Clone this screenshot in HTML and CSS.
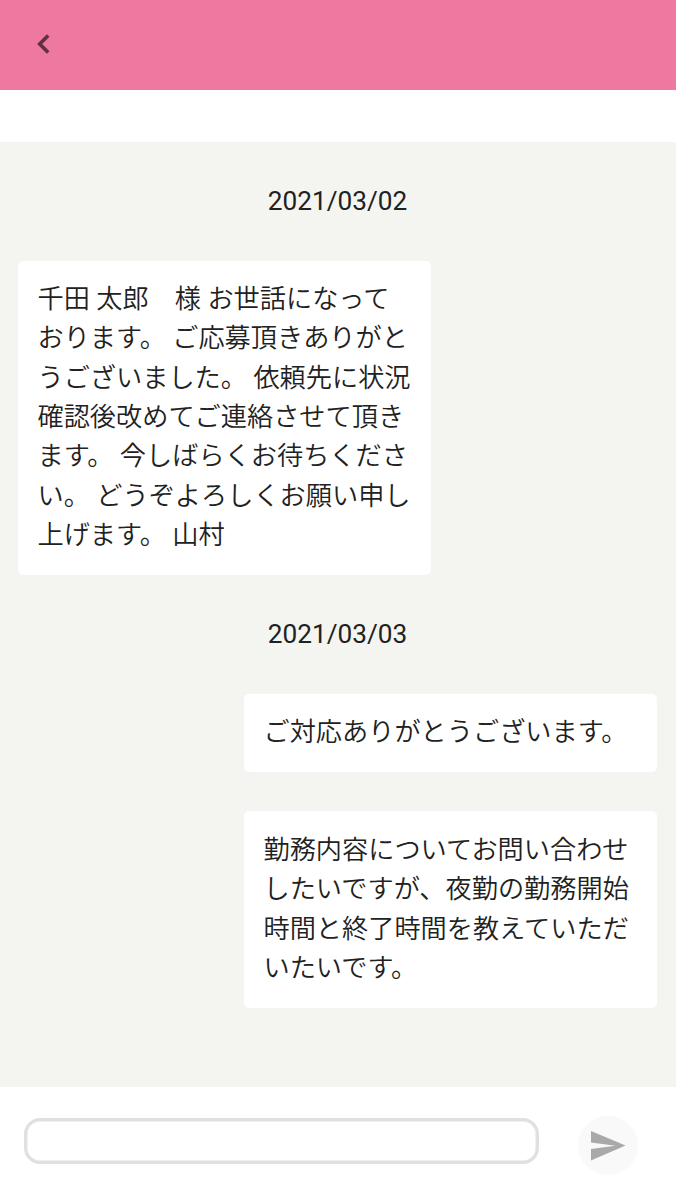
FILE: index.html
```html
<!DOCTYPE html>
<html lang="ja">
  <head>
    <meta charset="UTF-8" />
    <meta name="viewport" content="width=device-width, initial-scale=1.0" />
    <title>メッセージ</title>
    <link rel="stylesheet" href="styles.css">
  </head>
  <body>
    <div class="chat">
      <header class="header">
        <button type="button" class="back-button" aria-label="戻る">
          <svg width="14" height="20" viewBox="0 0 14 20">
            <path d="M12.2 1.5 L3.7 10 L12.2 18.5" fill="none" stroke="currentColor" stroke-width="3.6" />
          </svg>
        </button>
      </header>

      <main class="messages">
        <div class="date">2021/03/02</div>
        <div class="message received">
          千田 太郎　様 お世話になって<br>おります。 ご応募頂きありがと<br>うございました。 依頼先に状況<br>確認後改めてご連絡させて頂き<br>ます。 今しばらくお待ちくださ<br>い。 どうぞよろしくお願い申し<br>上げます。 山村
        </div>
        <div class="date second">2021/03/03</div>
        <div class="message sent">ご対応ありがとうございます。</div>
        <div class="message sent">
          勤務内容についてお問い合わせ<br>したいですが、夜勤の勤務開始<br>時間と終了時間を教えていただ<br>いたいです。
        </div>
      </main>

      <form class="message-form">
        <input type="text" class="message-input" name="message" />
        <button type="button" class="send-button" aria-label="送信">
          <svg width="36" height="30" viewBox="0 0 36 30">
            <path d="M1 0 L35.5 14.5 L1 29.5 V18 L25.5 14.7 L1 11.5 Z" fill="currentColor" />
          </svg>
        </button>
      </form>
    </div>
  </body>
</html>
```

FILE: styles.css
```css
body {
  margin: 0;
  font-family: Roboto, "Noto Sans CJK JP", sans-serif;
  color: #212121;
  background-color: #fff;
}
.chat {
  display: flex;
  flex-direction: column;
  height: 1204px;
}
.header {
  display: flex;
  align-items: center;
  box-sizing: border-box;
  height: 90px;
  padding: 0 0 2px 36px;
  background-color: #ef78a1;
}
.back-button {
  display: flex;
  padding: 0;
  border: none;
  background: none;
  color: #603041;
}
.messages {
  display: flex;
  flex-direction: column;
  box-sizing: border-box;
  height: 945px;
  margin-top: 52px;
  padding: 39px 19px 0 18px;
  background-color: #f4f5f0;
}
.date {
  height: 40px;
  line-height: 40px;
  margin-bottom: 39.6px;
  font-size: 26.2px;
  text-align: center;
}
.date.second {
  margin-top: 39px;
}
.message {
  box-sizing: border-box;
  width: 413px;
  padding: 19.5px 0 19.5px 19.5px;
  border-radius: 5px;
  background-color: #fff;
  font-family: Roboto, "Noto Sans CJK JP DemiLight", "Noto Sans CJK JP", sans-serif;
  font-size: 26.2px;
  font-weight: 350;
  line-height: 39.35px;
  white-space: nowrap;
}
.sent {
  align-self: flex-end;
  margin-bottom: 39.5px;
}
.message-form {
  display: flex;
  padding: 31px 38px 0 24px;
  justify-content: space-between;
}
.message-input {
  box-sizing: border-box;
  width: 515px;
  height: 46px;
  border: 3px solid #e0e0e0;
  border-radius: 16px;
  box-shadow: inset 0 0 0 0.5px #e0e0e0;
}
.send-button {
  display: flex;
  align-items: center;
  justify-content: center;
  width: 60px;
  height: 59px;
  padding: 0;
  margin-top: -2px;
  border: none;
  border-radius: 50%;
  background-color: #f9f9f9;
  color: #a9a9a9;
}
```
